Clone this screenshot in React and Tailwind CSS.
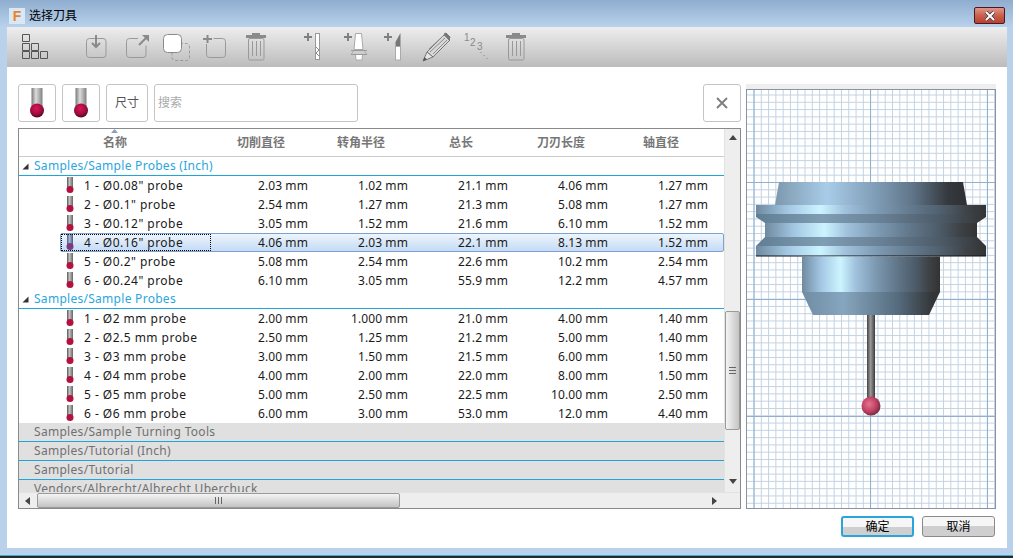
import React from 'react';

const inchRows = [
  ['1 - Ø0.08" probe', '2.03 mm', '1.02 mm', '21.1 mm', '4.06 mm', '1.27 mm'],
  ['2 - Ø0.1" probe', '2.54 mm', '1.27 mm', '21.3 mm', '5.08 mm', '1.27 mm'],
  ['3 - Ø0.12" probe', '3.05 mm', '1.52 mm', '21.6 mm', '6.10 mm', '1.52 mm'],
  ['4 - Ø0.16" probe', '4.06 mm', '2.03 mm', '22.1 mm', '8.13 mm', '1.52 mm', true],
  ['5 - Ø0.2" probe', '5.08 mm', '2.54 mm', '22.6 mm', '10.2 mm', '2.54 mm'],
  ['6 - Ø0.24" probe', '6.10 mm', '3.05 mm', '55.9 mm', '12.2 mm', '4.57 mm'],
];

const mmRows = [
  ['1 - Ø2 mm probe', '2.00 mm', '1.000 mm', '21.0 mm', '4.00 mm', '1.40 mm'],
  ['2 - Ø2.5 mm probe', '2.50 mm', '1.25 mm', '21.2 mm', '5.00 mm', '1.40 mm'],
  ['3 - Ø3 mm probe', '3.00 mm', '1.50 mm', '21.5 mm', '6.00 mm', '1.50 mm'],
  ['4 - Ø4 mm probe', '4.00 mm', '2.00 mm', '22.0 mm', '8.00 mm', '1.50 mm'],
  ['5 - Ø5 mm probe', '5.00 mm', '2.50 mm', '22.5 mm', '10.00 mm', '2.50 mm'],
  ['6 - Ø6 mm probe', '6.00 mm', '3.00 mm', '53.0 mm', '12.0 mm', '4.40 mm'],
];

const headers = ['切削直径', '转角半径', '总长', '刀刃长度', '轴直径'];
const collapsed = ['Samples/Sample Turning Tools', 'Samples/Tutorial (Inch)', 'Samples/Tutorial', 'Vendors/Albrecht/Albrecht Uberchuck'];

// toolbar icons use page coordinates in their viewBox
const Ic = ({ x, w, className = '', children }) => (
  <svg width={w} height={40} viewBox={`${x} 27 ${w} 40`} className={`shrink-0 ${className}`} fill="none">
    {children}
  </svg>
);

const Plus = ({ x }) => (
  <path d={`M${x} 37h8M${x + 4} 33v8`} stroke="#808080" strokeWidth="2" />
);

const Trash = ({ x }) => (
  <g>
    <rect x={x} y={35} width={20} height={3} fill="#8a8a8a" />
    <rect x={x + 6} y={33} width={8} height={2} fill="#8a8a8a" />
    <rect x={x + 2.5} y={38.5} width={15.5} height={21.5} rx={1.5} stroke="#999" />
    <path d={`M${x + 6.5} 41v15M${x + 10.5} 41v15M${x + 14.5} 41v15`} stroke="#999" />
  </g>
);

const Toolbar = () => (
  <div className="h-10 flex items-center pl-[15px] bg-gradient-to-b from-[#eeeeee] to-[#bcbcbc]">
    <Ic x={22} w={28}>
      <path d="M22.5 34.5h7v7h-7zM22.5 43.5h7v7h-7zM31.5 43.5h7v7h-7zM22.5 51.5h7v7h-7zM31.5 51.5h7v7h-7zM40.5 51.5h7v7h-7z" stroke="#555" />
    </Ic>
    <Ic x={85} w={23} className="ml-[35px]">
      <rect x={86.5} y={38.5} width={19.5} height={19} rx={3} stroke="#999" />
      <path d="M96 35v11M92 43l4 4 4-4" stroke="#8a8a8a" strokeWidth="2" />
    </Ic>
    <Ic x={125} w={25} className="ml-[17px]">
      <path d="M138 38.5h-8.500a3 3 0 0 0-3 3v13a3 3 0 0 0 3 3h13.500a3 3 0 0 0 3-3v-9" stroke="#999" />
      <path d="M139 45l7-7" stroke="#8a8a8a" strokeWidth="2" />
      <path d="M142 35h7v7z" fill="#8a8a8a" />
    </Ic>
    <Ic x={163} w={28} className="ml-[13px]">
      <rect x={172} y={43.5} width={17.5} height={17} rx={3} stroke="#999" strokeDasharray="3 2" />
      <rect x={163.5} y={34.5} width={18} height={18} rx={4} fill="#fff" stroke="#8a8a8a" />
    </Ic>
    <Ic x={202} w={25} className="ml-[11px]">
      <path d="M206.500 44v10.500a3 3 0 0 0 3 3h13a3 3 0 0 0 3-3v-13a3 3 0 0 0-3-3h-9" stroke="#999" />
      <path d="M203 39h9M207.500 35v8" stroke="#8a8a8a" strokeWidth="2" />
    </Ic>
    <Ic x={245} w={22} className="ml-[18px]">
      <Trash x={246} />
    </Ic>
    <Ic x={304} w={18} className="ml-[37px]">
      <Plus x={304} />
      <rect x={315.5} y={33.5} width={4} height={26} fill="#fff" stroke="#999" />
      <path d="M316 47l3 3-3 3 3 3" stroke="#888" />
    </Ic>
    <Ic x={343} w={26} className="ml-[21px]">
      <Plus x={344} />
      <path d="M355.500 33.500h6l1.500 16h-9zM355.500 54.500h7l-.5 5.500h-6z" fill="#fff" stroke="#aaa" />
      <path d="M351 50.500h16M351 54.500h16" stroke="#999" />
      <path d="M354 50.500l-3 4M364 50.500l3 4" stroke="#aaa" />
    </Ic>
    <Ic x={383} w={20} className="ml-[14px]">
      <Plus x={384} />
      <path d="M400.500 33v13h-5v-4z" fill="#777" />
      <rect x={395.500} y={46.500} width={5} height={13.500} fill="#fff" stroke="#aaa" />
    </Ic>
    <Ic x={421} w={30} className="ml-[18px]">
      <path d="M427 52l17-17 6 5-17 17z" fill="#d8d8d8" stroke="#777" />
      <path d="M430 52l15-14M433 54l14-14M429 49l14-13" stroke="#8e8e8e" />
      <path d="M444 34l2-1 4 4-1 3z" fill="#777" stroke="#777" />
      <path d="M423 61l4-9 6 5z" fill="#e6e6e6" stroke="#777" />
      <path d="M423 61l1.500-4 2.500 2.500z" fill="#555" />
    </Ic>
    <Ic x={463} w={28} className="ml-[12px]">
      <text x={464} y={41} fontSize="10" fill="#8a8a8a" fontFamily="'Liberation Sans', sans-serif">1</text>
      <text x={470} y={46} fontSize="10" fill="#8a8a8a" fontFamily="'Liberation Sans', sans-serif">2</text>
      <text x={477} y={50} fontSize="10" fill="#8a8a8a" fontFamily="'Liberation Sans', sans-serif">3</text>
      <path d="M480.500 52.500h1M483.500 55.500h1M486.500 58.500h1" stroke="#888" />
    </Ic>
    <Ic x={505} w={22} className="ml-[14px]">
      <Trash x={506} />
    </Ic>
  </div>
);

const BigProbe = () => (
  <svg width={16} height={30} viewBox="0 0 16 30">
    <defs>
      <linearGradient id="bigShank" x1="0" x2="1" y1="0" y2="0">
        <stop offset="0" stopColor="#777" />
        <stop offset="0.4" stopColor="#dcdcdc" />
        <stop offset="1" stopColor="#808080" />
      </linearGradient>
      <radialGradient id="bigBall" cx="0.45" cy="0.35" r="0.65">
        <stop offset="0" stopColor="#d81858" />
        <stop offset="0.65" stopColor="#a00c3c" />
        <stop offset="1" stopColor="#4a0a20" />
      </radialGradient>
    </defs>
    <rect x={2.5} y={0} width={11} height={20} fill="url(#bigShank)" />
    <circle cx={8} cy={22.500} r={7} fill="url(#bigBall)" />
  </svg>
);

const SmallProbe = ({ selected }) => (
  <svg width={8} height={17} viewBox="0 0 8 17" className="shrink-0">
    <defs>
      <linearGradient id="smShank" x1="0" x2="1" y1="0" y2="0">
        <stop offset="0" stopColor="#555" />
        <stop offset="0.4" stopColor="#c4c4c4" />
        <stop offset="1" stopColor="#666" />
      </linearGradient>
      <linearGradient id="smShankSel" x1="0" x2="1" y1="0" y2="0">
        <stop offset="0" stopColor="#4a5a78" />
        <stop offset="0.4" stopColor="#a8b8d8" />
        <stop offset="1" stopColor="#4a5a78" />
      </linearGradient>
    </defs>
    <rect x={1} y={0} width={6} height={11} fill={selected ? 'url(#smShankSel)' : 'url(#smShank)'} />
    <circle cx={4} cy={12.500} r={3.500} fill={selected ? '#7d3a80' : '#b3123f'} />
  </svg>
);

const Row = ({ row }) => {
  const [name, a, b, c, d, e, selected] = row;
  const vals = [a, b, c, d, e];
  return (
    <div className={`relative h-[19px] ml-[41px] flex items-center text-[#1a1a1a] whitespace-nowrap ${selected ? 'border border-[#7da2ce] rounded-[2px] bg-gradient-to-b from-[#eef5fd] to-[#c4dbf5]' : 'border border-transparent'}`}>
      <div className={`w-[150px] h-full flex items-center pl-[5px] shrink-0 ${selected ? 'outline outline-1 outline-dotted outline-black -outline-offset-1' : ''}`}>
        <SmallProbe selected={selected} />
        <span className="ml-[10px] tracking-[0.47px]">{name}</span>
      </div>
      {vals.map((v, i) => (
        <span key={i} className="w-[100px] shrink-0 text-right pr-[3px] tracking-[0.1px]">{v}</span>
      ))}
    </div>
  );
};

const GroupOpen = ({ label }) => (
  <div className="h-[19px] flex items-center border-b border-[#1ea6dc] text-[#2aa6e0] tracking-[0.28px] relative">
    <svg width={7} height={7} viewBox="0 0 7 7" className="ml-[3px] shrink-0">
      <path d="M6.500 0.500v6h-6z" fill="#333" />
    </svg>
    <span className="ml-[5px]">{label}</span>
  </div>
);

const ScrollV = () => (
  <div className="w-[16px] flex flex-col items-center bg-[#eeeeee] border-l border-[#e2e2e2] relative shrink-0">
    <svg width={8} height={5} viewBox="0 0 8 5" className="mt-[6px] shrink-0"><path d="M4 0l4 5H0z" fill="#444" /></svg>
    <div className="mt-[171px] w-[15px] h-[119px] rounded-[2px] border border-[#9a9a9a] bg-gradient-to-r from-[#f4f4f4] to-[#c4c4c4] flex items-center justify-center">
      <div className="w-[7px] h-[7px] border-y border-[#666] flex items-center"><div className="w-full h-px bg-[#666]" /></div>
    </div>
    <svg width={8} height={5} viewBox="0 0 8 5" className="mt-[49px] shrink-0"><path d="M4 5l4-5H0z" fill="#444" /></svg>
  </div>
);

const ScrollH = () => (
  <div className="h-[16px] flex items-center bg-[#eeeeee] shrink-0 border-t border-[#e2e2e2]">
    <svg width={5} height={8} viewBox="0 0 5 8" className="ml-[6px] shrink-0"><path d="M0 4l5-4v8z" fill="#444" /></svg>
    <div className="ml-[7px] w-[363px] h-[15px] rounded-[2px] border border-[#9a9a9a] bg-gradient-to-b from-[#f4f4f4] to-[#c4c4c4] flex items-center justify-center shrink-0">
      <div className="w-[7px] h-[7px] border-x border-[#666] flex justify-center"><div className="h-full w-px bg-[#666]" /></div>
    </div>
    <svg width={5} height={8} viewBox="0 0 5 8" className="ml-[312px] shrink-0"><path d="M5 4L0 0v8z" fill="#444" /></svg>
  </div>
);

const ToolTable = () => (
  <div className="mt-[6px] h-[381px] border border-[#8a8a8a] flex flex-col text-[12px]">
    <div className="flex-1 min-h-0 flex">
      <div className="flex-1 min-w-0 overflow-hidden">
        <div className="h-[28px] flex items-center pt-px border-b border-[#cccccc] text-[#777777] font-semibold relative">
          <svg width={7} height={4} viewBox="0 0 7 4" className="absolute left-[92px] top-0"><path d="M3.500 0l3.500 4H0z" fill="#8aa0b5" /></svg>
          <span className="w-[192px] text-center shrink-0">名称</span>
          {headers.map((h) => (
            <span key={h} className="w-[100px] text-center shrink-0">{h}</span>
          ))}
        </div>
        <GroupOpen label="Samples/Sample Probes (Inch)" />
        {inchRows.map((r) => <Row key={r[0]} row={r} />)}
        <GroupOpen label="Samples/Sample Probes" />
        {mmRows.map((r) => <Row key={r[0]} row={r} />)}
        {collapsed.map((c) => (
          <div key={c} className="h-[19px] flex items-center pl-[15px] bg-[#e0e0e0] border-b border-[#1ea6dc] text-[#707070] tracking-[0.3px]">{c}</div>
        ))}
      </div>
      <ScrollV />
    </div>
    <ScrollH />
  </div>
);

const Btn = ({ className = '', children }) => (
  <div className={`h-[38px] rounded-[3px] border border-[#c4c4c4] bg-white flex items-center justify-center shrink-0 ${className}`}>{children}</div>
);

const minorX = Array.from({ length: 36 }, (_, i) => 754 + i * 7.29);
const minorY = Array.from({ length: 60 }, (_, i) => 95 + i * 7.29);

const ToolView = () => (
  <div className="w-[250px] shrink-0 bg-[#eeeeee] pt-[5px] h-[425px]">
    <div className="h-[420px] border border-[#8a94a0] bg-white">
      <svg width={248} height={418} viewBox="747 90 248 418" className="block">
        <defs>
          <linearGradient id="topG" x1="0" x2="1" y1="0" y2="0">
            <stop offset="0" stopColor="#7d98ad" />
            <stop offset="0.27" stopColor="#a8cce8" />
            <stop offset="0.54" stopColor="#7d9ab3" />
            <stop offset="0.72" stopColor="#5f7488" />
            <stop offset="0.9" stopColor="#35393d" />
            <stop offset="1" stopColor="#2e3033" />
          </linearGradient>
          <linearGradient id="lightG" x1="0" x2="1" y1="0" y2="0">
            <stop offset="0" stopColor="#6f8aa0" />
            <stop offset="0.14" stopColor="#a4c8e4" />
            <stop offset="0.28" stopColor="#ccf4ff" />
            <stop offset="0.39" stopColor="#a0c0dc" />
            <stop offset="0.53" stopColor="#7d9ab3" />
            <stop offset="0.68" stopColor="#62788c" />
            <stop offset="0.82" stopColor="#4d5c69" />
            <stop offset="0.92" stopColor="#3e4246" />
            <stop offset="1" stopColor="#333333" />
          </linearGradient>
          <linearGradient id="darkG" x1="0" x2="1" y1="0" y2="0">
            <stop offset="0" stopColor="#5f7d93" />
            <stop offset="0.29" stopColor="#7f9db3" />
            <stop offset="0.53" stopColor="#6a8298" />
            <stop offset="0.82" stopColor="#4a5864" />
            <stop offset="1" stopColor="#333333" />
          </linearGradient>
          <linearGradient id="chamG" x1="0" x2="1" y1="0" y2="0">
            <stop offset="0" stopColor="#6f8ca3" />
            <stop offset="0.3" stopColor="#86a6bf" />
            <stop offset="0.7" stopColor="#556a7c" />
            <stop offset="0.95" stopColor="#333537" />
          </linearGradient>
          <linearGradient id="stemG" x1="0" x2="1" y1="0" y2="0">
            <stop offset="0" stopColor="#444" />
            <stop offset="0.45" stopColor="#9a9a9a" />
            <stop offset="1" stopColor="#3a3a3a" />
          </linearGradient>
          <radialGradient id="ballG" cx="0.4" cy="0.4" r="0.65">
            <stop offset="0" stopColor="#e8728f" />
            <stop offset="0.6" stopColor="#bf4163" />
            <stop offset="1" stopColor="#6a2a3a" />
          </radialGradient>
        </defs>
        {minorX.map((x) => <line key={x} x1={x} x2={x} y1={90} y2={508} stroke="#c3d3e4" />)}
        {minorY.map((y) => <line key={y} x1={747} x2={995} y1={y} y2={y} stroke="#c3d3e4" />)}
        {[754, 870.500, 987.500].map((x) => <line key={x} x1={x} x2={x} y1={90} y2={508} stroke="#8fb0cf" />)}
        {[182.500, 299.500, 416.500].map((y) => <line key={y} x1={747} x2={995} y1={y} y2={y} stroke="#8fb0cf" />)}
        <path d="M779 182h184l4 23H775z" fill="url(#topG)" />
        <path d="M756 205h230v9h-230z" fill="url(#lightG)" />
        <path d="M756 214h230v3l-9 6H765l-9-6z" fill="url(#darkG)" />
        <path d="M765 223h212v14H765z" fill="url(#lightG)" />
        <path d="M765 237h212l9 9H756z" fill="url(#darkG)" />
        <path d="M756 246h230v10H756z" fill="url(#lightG)" />
        <path d="M756 256h230" stroke="#111" />
        <path d="M802 256.500h138V292H802z" fill="url(#lightG)" />
        <path d="M802 292h138l-11 23H813z" fill="url(#chamG)" />
        <rect x={867} y={315} width={8} height={84} fill="url(#stemG)" />
        <circle cx={871} cy={406} r={9.500} fill="url(#ballG)" />
      </svg>
    </div>
  </div>
);

export default function App() {
  return (
    <div className="w-[1013px] h-[558px] overflow-hidden bg-[#b9d1ea] flex flex-col [font-family:'Noto_Sans','Noto_Sans_CJK_SC',sans-serif]">
      <div className="h-[27px] shrink-0 flex items-center pt-[4px] pl-[9px] pr-[8px] bg-gradient-to-b from-[#8fadcf] to-[#b8d2ec]">
        <div className="w-4 h-4 bg-[#d8e8f4] flex items-center justify-center text-[#e8842c] font-bold text-[14px] leading-none [font-family:'Liberation_Sans',sans-serif]">F</div>
        <span className="ml-1 text-[12px] text-black">选择刀具</span>
        <div className="ml-auto w-[31px] h-[17px] rounded-[2px] border border-[#4a1a22] bg-gradient-to-b from-[#e2958a] via-[#c9604c] to-[#b8402e] flex items-center justify-center">
          <svg width={14} height={10} viewBox="0 0 14 10">
            <path d="M3 1l8 8M11 1L3 9" stroke="#3a3a4a" strokeWidth="3.500" />
            <path d="M3 1l8 8M11 1L3 9" stroke="#fff" strokeWidth="2" />
          </svg>
        </div>
      </div>
      <div className="ml-[7px] w-[1000px] h-[521px] shrink-0 bg-white flex flex-col">
        <Toolbar />
        <div className="flex pl-[11px] pt-[17px] gap-[5px]">
          <div className="w-[723px] shrink-0">
            <div className="flex gap-[6px] text-[12px]">
              <Btn className="w-[38px]"><BigProbe /></Btn>
              <Btn className="w-[38px]"><BigProbe /></Btn>
              <Btn className="w-[42px] text-[#555]">尺寸</Btn>
              <Btn className="w-[204px] justify-start pl-[3px] text-[#aaaaaa]">搜索</Btn>
              <Btn className="w-[38px] ml-auto">
                <svg width={12} height={12} viewBox="0 0 12 12"><path d="M1 1l10 10M11 1L1 11" stroke="#808080" strokeWidth="2" /></svg>
              </Btn>
            </div>
            <ToolTable />
          </div>
          <ToolView />
        </div>
        <div className="flex justify-end gap-2 pr-[12px] mt-[7px] text-[12px] text-black">
          <div className="w-[73px] h-[21px] rounded-[3px] border-2 border-[#2aa5dc] bg-[linear-gradient(#f6f6f6_50%,#cfcfcf_50%)] flex items-center justify-center">确定</div>
          <div className="w-[73px] h-[21px] rounded-[3px] border border-[#8a8a8a] bg-[linear-gradient(#f6f6f6_50%,#cfcfcf_50%)] flex items-center justify-center">取消</div>
        </div>
      </div>
      <div className="mt-[7px] h-px bg-[#4fa3c8] shrink-0" />
      <div className="flex-1 bg-[#1f2a33]" />
    </div>
  );
}
